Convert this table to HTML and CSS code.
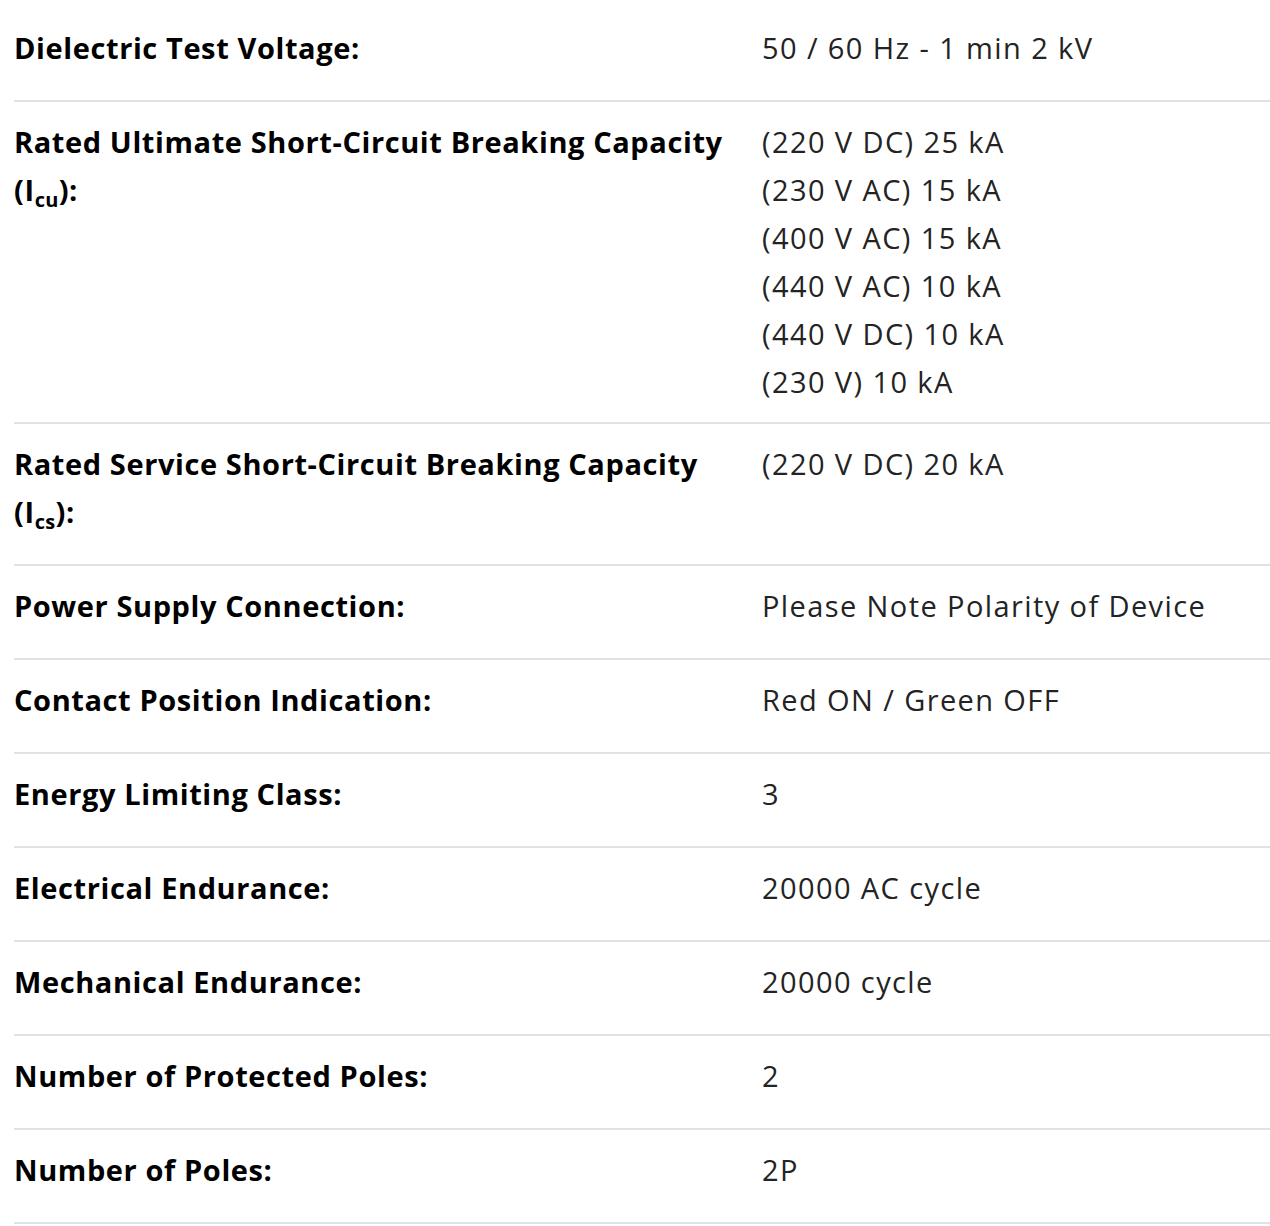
FILE: index.html
```html
<!DOCTYPE html>
<html lang="en">
<head>
<meta charset="utf-8">
<title>Specifications</title>
<link rel="stylesheet" href="styles.css">
</head>
<body>
<div class="specs">
  <div class="row">
    <div class="label">Dielectric Test Voltage:</div>
    <div class="value">50 / 60 Hz - 1 min 2 kV</div>
  </div>
  <div class="row">
    <div class="label">Rated Ultimate Short-Circuit Breaking Capacity<br>(I<sub>cu</sub>):</div>
    <div class="value multi">
      <div>(220 V DC) 25 kA</div>
      <div>(230 V AC) 15 kA</div>
      <div>(400 V AC) 15 kA</div>
      <div>(440 V AC) 10 kA</div>
      <div>(440 V DC) 10 kA</div>
      <div>(230 V) 10 kA</div>
    </div>
  </div>
  <div class="row">
    <div class="label">Rated Service Short-Circuit Breaking Capacity<br>(I<sub>cs</sub>):</div>
    <div class="value">(220 V DC) 20 kA</div>
  </div>
  <div class="row">
    <div class="label">Power Supply Connection:</div>
    <div class="value">Please Note Polarity of Device</div>
  </div>
  <div class="row">
    <div class="label">Contact Position Indication:</div>
    <div class="value">Red ON / Green OFF</div>
  </div>
  <div class="row">
    <div class="label">Energy Limiting Class:</div>
    <div class="value">3</div>
  </div>
  <div class="row">
    <div class="label">Electrical Endurance:</div>
    <div class="value">20000 AC cycle</div>
  </div>
  <div class="row">
    <div class="label">Mechanical Endurance:</div>
    <div class="value">20000 cycle</div>
  </div>
  <div class="row">
    <div class="label">Number of Protected Poles:</div>
    <div class="value">2</div>
  </div>
  <div class="row">
    <div class="label">Number of Poles:</div>
    <div class="value">2P</div>
  </div>
</div>
</body>
</html>
```

FILE: styles.css
```css
html, body {
  margin: 0;
  padding: 0;
  background: #ffffff;
}

body {
  padding: 8px 0 0 14px;
  font-family: "Open Sans", "Noto Sans", Arial, sans-serif;
  font-size: 29px;
  line-height: 48px;
}

.specs {
  display: flex;
  flex-direction: column;
}

.row {
  display: grid;
  grid-template-columns: 748px 1fr;
  padding: 16px 0;
  border-bottom: 2px solid #dfe3e7;
}

.label {
  font-weight: 700;
  color: #000000;
  letter-spacing: 0.6px;
  margin-bottom: 12px;
}

.label sub {
  font-size: 20px;
  line-height: 0;
  letter-spacing: 0.3px;
  vertical-align: -6px;
}

.value {
  color: #232323;
  letter-spacing: 1.4px;
  margin-bottom: 12px;
}

.value.multi {
  margin-bottom: 0;
}
```
